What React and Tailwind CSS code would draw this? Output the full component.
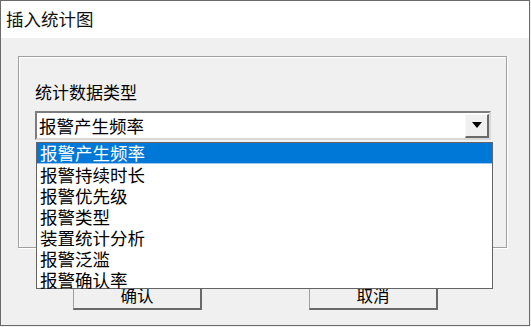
import React from "react";

const font = { fontFamily: '"Noto Sans CJK SC", "Noto Sans", sans-serif' };

export default function App() {
  const items = ["报警产生频率", "报警持续时长", "报警优先级", "报警类型", "装置统计分析", "报警泛滥", "报警确认率"];
  return (
    <div className="w-[531px] h-[327px] bg-[#f0f0f0]" style={font}>
      <div className="relative w-[530px] h-[326px] border border-[#6a6a6a] flex flex-col">
        <div className="h-[37px] bg-white flex items-center pl-[5px] pb-[1px] text-[17.5px] leading-none text-[#111]">
          插入统计图
        </div>
        <div className="flex-1 bg-[#f0f0f0] pt-[18px] pl-[17px]">
          <div className="w-[489px] h-[192px] border border-[#a0a0a0] shadow-[1px_1px_0_#fff,inset_1px_1px_0_#fff] pl-[16px] pt-[25px]">
            <div className="text-[17px] leading-[20px] text-black">统计数据类型</div>
            <div className="mt-[9px] w-[456px] h-[29px] bg-white border-2 border-t-[#7c7c7c] border-l-[#7c7c7c] border-r-[#d8d8d8] border-b-[#d8d8d8] flex items-center">
              <span className="flex-1 pl-[2px] text-[17.5px] leading-none text-black">报警产生频率</span>
              <div className="w-[24px] h-[24px] bg-[#f0f0f0] border-t border-l border-t-[#f8f8f8] border-l-[#f8f8f8] border-r-2 border-b-2 border-r-[#6a6a6a] border-b-[#6a6a6a] flex items-center justify-center">
                <svg width="10" height="6" viewBox="0 0 10 6"><path d="M0 0H10L5 6Z" fill="#000" /></svg>
              </div>
            </div>
          </div>
          <div className="flex mt-[34px]">
            <div className="ml-[55px] w-[129px] h-[28px] bg-[#f0f0f0] border-l border-t border-l-[#a0a0a0] border-t-[#fff] border-r-2 border-b-2 border-r-[#696969] border-b-[#696969] flex items-center justify-center text-[16.5px] leading-none text-black">确认</div>
            <div className="ml-[107px] w-[129px] h-[28px] bg-[#f0f0f0] border-l border-t border-l-[#a0a0a0] border-t-[#fff] border-r-2 border-b-2 border-r-[#696969] border-b-[#696969] flex items-center justify-center text-[16.5px] leading-none text-black">取消</div>
          </div>
        </div>
        <div className="absolute left-[35px] top-[141px] w-[457px] h-[147px] bg-white border border-[#646464] flex flex-col">
          {items.map((t, i) => (
            <div
              key={t}
              className={
                i === 0
                  ? "h-[21px] shrink-0 bg-[#0078d7] text-white border-b border-b-[#9cc8ef] pl-[3px] flex items-center text-[17.5px] leading-none"
                  : "h-[21px] shrink-0 text-black pl-[3px] flex items-center text-[17.5px] leading-none"
              }
            >
              {t}
            </div>
          ))}
        </div>
      </div>
    </div>
  );
}
